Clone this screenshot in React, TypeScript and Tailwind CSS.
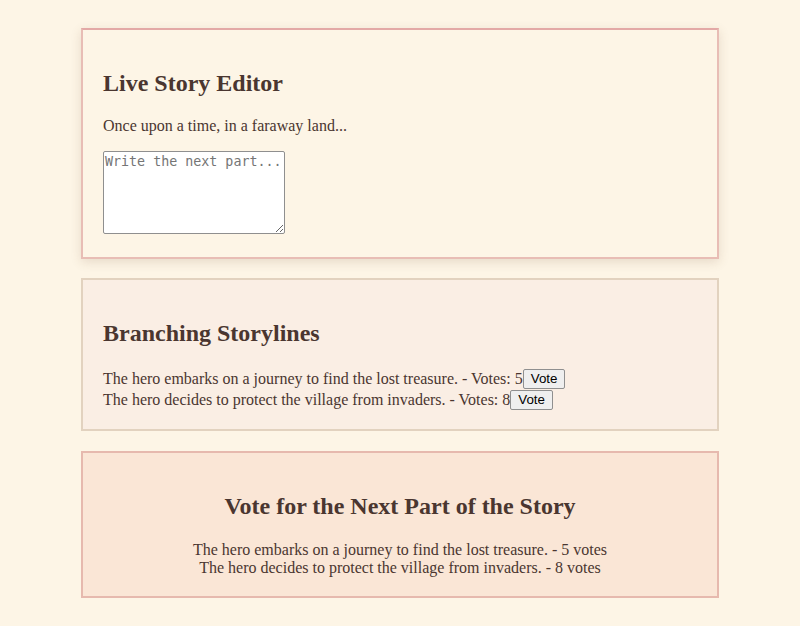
import { useState } from 'react';

const branches = [
    { text: 'The hero embarks on a journey to find the lost treasure.', votes: 5 },
    { text: 'The hero decides to protect the village from invaders.', votes: 8 },
];

export default function App() {
    const [options, setOptions] = useState(branches);
    const [draft, setDraft] = useState('');

    const vote = (i: number) =>
        setOptions(options.map((o, j) => (j === i ? { ...o, votes: o.votes + 1 } : o)));

    return (
        <div className="min-h-[626px] bg-[#fdf5e6] pt-7 pb-7 text-[#4a3630] font-['Liberation_Serif',_'Times_New_Roman',_serif] text-base">
            {/* Live editor */}
            <section className="w-[638px] mx-auto mb-[19px] p-5 bg-[#fdf5e6] border-2 border-[#e8bdb5] border-t-[#e3a9a6] shadow-[0_3px_10px_rgba(120,80,50,0.16)]">
                <h2 className="mt-5 mb-5 text-2xl font-bold leading-[27px]">Live Story Editor</h2>
                <p className="mb-4 leading-[18px]">Once upon a time, in a faraway land...</p>
                <textarea
                    value={draft}
                    onChange={(e) => setDraft(e.target.value)}
                    placeholder="Write the next part..."
                    className="w-[182px] h-[83px] align-bottom bg-white border border-[#8f8f8f] rounded-[2px] px-[1px] py-[2px] text-[13.33px] leading-[16px] text-black font-['DejaVu_Sans_Mono',_monospace] placeholder:text-[#757575] resize"
                />
                <div className="h-[3px]" />
            </section>

            {/* Branches */}
            <section className="w-[638px] mx-auto mb-5 px-5 pt-5 pb-[19px] bg-[#faeee4] border-2 border-[#e2d2bf]">
                <h2 className="mt-5 mb-[21px] text-2xl font-bold leading-[27px]">Branching Storylines</h2>
                {options.map((o, i) => (
                    <div key={i} className="leading-[18px] h-[21px] flex items-center">
                        <span>
                            {o.text} - Votes: {o.votes}
                        </span>
                        <button
                            onClick={() => vote(i)}
                            className="h-[20px] px-[7px] bg-[#efefef] border border-[#8f8f8f] rounded-[2px] text-[13.33px] leading-none text-black font-['Liberation_Sans',_Arial,_sans-serif]"
                        >
                            Vote
                        </button>
                    </div>
                ))}
            </section>

            {/* Results */}
            <section className="w-[638px] mx-auto px-5 pt-5 pb-[19px] bg-[#fae6d6] border-2 border-[#e6b9ae] text-center">
                <h2 className="mt-5 mb-[21px] text-2xl font-bold leading-[27px]">Vote for the Next Part of the Story</h2>
                {options.map((o, i) => (
                    <div key={i} className="leading-[18px]">
                        {o.text} - {o.votes} votes
                    </div>
                ))}
            </section>
        </div>
    );
}
